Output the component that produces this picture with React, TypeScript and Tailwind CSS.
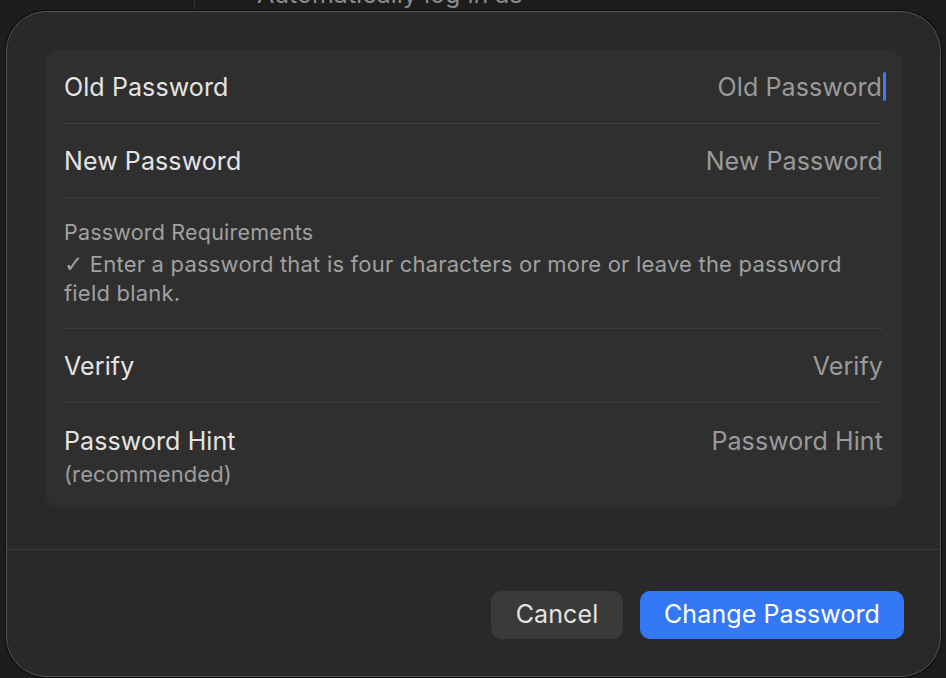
import React from "react";

const font = { fontFamily: "Inter, 'Noto Sans', sans-serif" };

function FieldRow({ label, placeholder, sub, cursor, last }: { label: string; placeholder: string; sub?: string; cursor?: boolean; last?: boolean }) {
  return (
    <div className={`flex justify-between ${sub ? "h-[104px] pt-[22px]" : "h-[74px] items-center"} ${last ? "" : "border-b border-[#3c3c3c]"}`}>
      <div className="flex flex-col">
        <span className="text-[25px] leading-[32px] tracking-[0.1px] text-[#e4e4e4]">{label}</span>
        {sub && <span className="text-[22px] leading-[34px] tracking-[0.1px] text-[#9c9c9c]">{sub}</span>}
      </div>
      <div className={`flex ${sub ? "h-[32px]" : ""} items-center text-[25px] leading-[32px] tracking-[0.1px] text-[#9a9a9a]`}>
        {placeholder}
        {cursor && <span className="-mr-[3px] ml-[1px] h-[29px] w-[3px] rounded-sm bg-[#3b7cf5]" />}
      </div>
    </div>
  );
}

export default function App() {
  return (
    <div className="relative h-[678px] w-[946px] overflow-hidden bg-[#1c1c1c]" style={font}>
      {/* window behind the sheet */}
      <div className="absolute left-[194px] top-0 h-[10px] w-[1px] bg-[#333]" />
      <div className="absolute left-[257px] top-[-21px] text-[25px] leading-[30px] text-[#8c8c8c]">Automatically log in as</div>

      <div className="relative ml-[6px] mt-[11px] flex h-[666px] w-[935px] flex-col rounded-[40px] border border-[#555555] bg-[#292929] shadow-[0_0_0_1px_#0a0a0a]">
        <div className="mx-[38px] mt-[38px] rounded-[14px] bg-[#2f2f2f] px-[19px]">
          <FieldRow label="Old Password" placeholder="Old Password" cursor />
          <FieldRow label="New Password" placeholder="New Password" />
          <div className="flex h-[131px] flex-col border-b border-[#3c3c3c] pt-[20px] text-[#a0a0a0]">
            <span className="text-[21.5px] leading-[29px] tracking-[0.2px]">Password Requirements</span>
            <span className="mt-[3px] pr-[30px] text-[22px] leading-[29px] tracking-[0.2px]">
              <span className="text-[23px]" style={{ fontFamily: "'DejaVu Sans', sans-serif" }}>✓</span> Enter a password that is four characters or more or leave the password field blank.
            </span>
          </div>
          <FieldRow label="Verify" placeholder="Verify" />
          <FieldRow label="Password Hint" placeholder="Password Hint" sub="(recommended)" last />
        </div>

        <div className="mt-[42px] h-[1px] w-full bg-[#3a3a3a]" />

        <div className="mr-[36px] mt-[41px] flex justify-end gap-[17px]">
          <button className="h-[48px] w-[132px] rounded-[10px] bg-[#3a3a3a] text-[25px] tracking-[0.1px] text-[#e2e2e2]">Cancel</button>
          <button className="h-[48px] w-[264px] rounded-[10px] bg-[#3478f6] text-[25px] tracking-[0.1px] text-white">Change Password</button>
        </div>
      </div>
    </div>
  );
}
